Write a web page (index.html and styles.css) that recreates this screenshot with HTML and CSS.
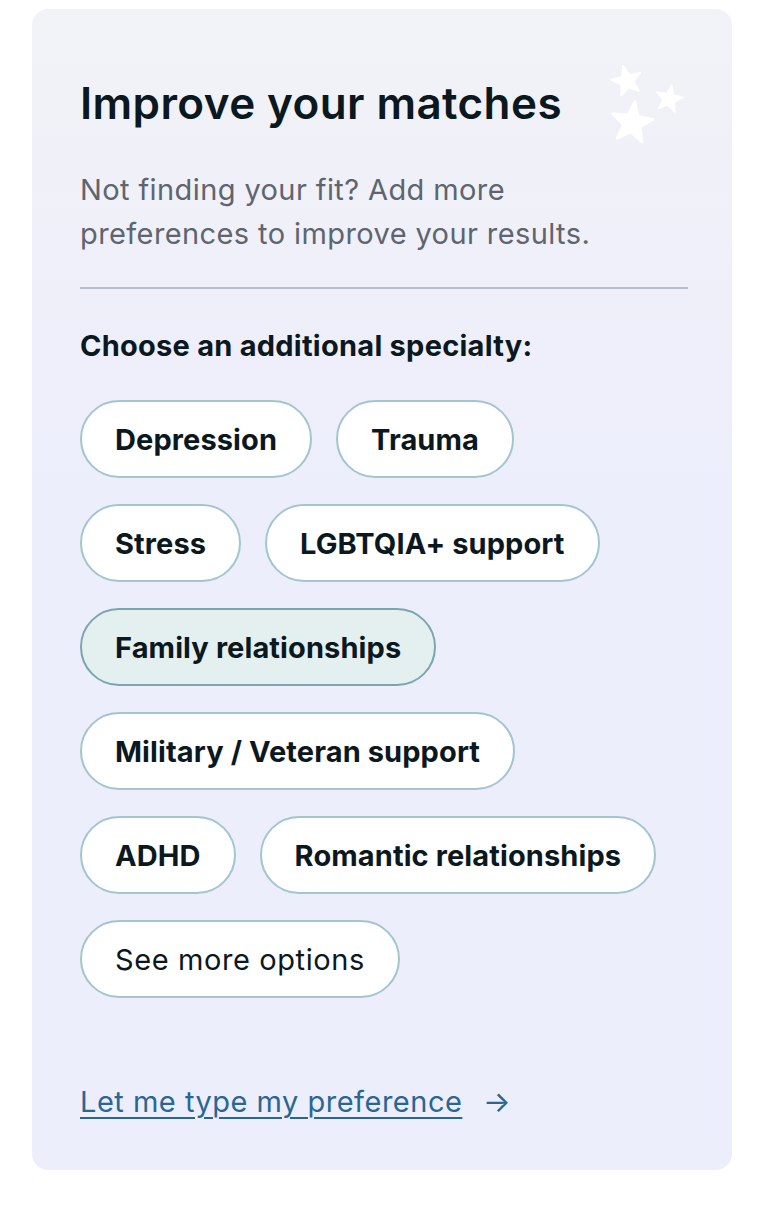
FILE: index.html
```html
<!DOCTYPE html>
<html lang="en">
<head>
  <meta charset="UTF-8">
  <meta name="viewport" content="width=device-width, initial-scale=1.0">
  <link rel="stylesheet" href="styles.css">
  <title>Improve your matches</title>
</head>
<body>
  <section class="matches">
    <svg class="matches__stars" width="90" height="92" viewBox="0 0 90 92" aria-hidden="true">
      <g fill="#fff" stroke="#fff" stroke-width="1.2" stroke-linejoin="round">
        <polygon transform="translate(27 23) rotate(-14) scale(1.55)" points="0,-10 2.47,-3.4 9.51,-3.09 3.99,1.3 5.88,8.09 0,4.2 -5.88,8.09 -3.99,1.3 -9.51,-3.09 -2.47,-3.4"/>
        <polygon transform="translate(69 41) rotate(12) scale(1.4)" points="0,-10 2.47,-3.4 9.51,-3.09 3.99,1.3 5.88,8.09 0,4.2 -5.88,8.09 -3.99,1.3 -9.51,-3.09 -2.47,-3.4"/>
        <polygon transform="translate(32 65) rotate(8) scale(2.15)" points="0,-10 2.47,-3.4 9.51,-3.09 3.99,1.3 5.88,8.09 0,4.2 -5.88,8.09 -3.99,1.3 -9.51,-3.09 -2.47,-3.4"/>
      </g>
    </svg>

    <h2 class="matches__title">Improve your matches</h2>
    <p class="matches__text">Not finding your fit? Add more preferences to improve your results.</p>

    <hr class="matches__divider">

    <h3 class="matches__label">Choose an additional specialty:</h3>

    <div class="matches__options">
      <button class="pill">Depression</button>
      <button class="pill">Trauma</button>
      <button class="pill">Stress</button>
      <button class="pill">LGBTQIA+ support</button>
      <button class="pill pill--selected">Family relationships</button>
      <button class="pill">Military / Veteran support</button>
      <button class="pill">ADHD</button>
      <button class="pill">Romantic relationships</button>
      <button class="pill pill--more">See more options</button>
    </div>

    <a class="matches__link" href="#"><span class="matches__link-text">Let me type my preference</span> <span class="matches__arrow">&rarr;</span></a>
  </section>
</body>
</html>
```

FILE: styles.css
```css
body {
  margin: 0;
  background: #fff;
  font-family: "Inter", "Liberation Sans", sans-serif;
  color: #0b1820;
}

.matches {
  position: relative;
  width: 700px;
  box-sizing: border-box;
  margin: 9px 0 0 32px;
  padding: 70px 44px 50px 48px;
  border-radius: 16px;
  background: linear-gradient(180deg, #f2f3f7 0%, #eeeff9 25%, #eceefc 45%, #eceefc 100%);
}

.matches__stars {
  position: absolute;
  left: 568px;
  top: 49px;
}

.matches__title {
  margin: 0;
  font-size: 44px;
  line-height: 48px;
  font-weight: 600;
  letter-spacing: 0.4px;
}

.matches__text {
  margin: 41px 0 0;
  font-size: 29px;
  line-height: 44px;
  color: #5e656e;
  letter-spacing: 0.4px;
  max-width: 540px;
}

.matches__divider {
  margin: 31px 0 0;
  height: 2px;
  border: 0;
  background: #b5bec8;
  width: 608px;
}

.matches__label {
  margin: 39px 0 0;
  font-size: 29px;
  line-height: 36px;
  font-weight: 700;
  letter-spacing: 0.25px;
}

.matches__options {
  display: flex;
  flex-wrap: wrap;
  gap: 26px 24px;
  margin-top: 36px;
}

.pill {
  height: 78px;
  padding: 0 33px;
  border: 2px solid #a3c5cd;
  border-radius: 39px;
  background: #fff;
  font-family: inherit;
  font-size: 29px;
  font-weight: 700;
  letter-spacing: 0.1px;
  color: #0b1820;
  cursor: pointer;
}

.pill--selected {
  background: #e4eff0;
  border-color: #7ca6ae;
}

.pill--more {
  font-weight: 400;
  letter-spacing: 0.6px;
}

.matches__link {
  display: block;
  margin-top: 86px;
  font-size: 29px;
  line-height: 36px;
  color: #2a6694;
  letter-spacing: 0.5px;
  text-decoration: none;
}

.matches__link-text {
  text-decoration: underline;
  text-decoration-thickness: 2px;
  text-underline-offset: 5px;
}

.matches__arrow {
  margin-left: 12px;
}
```
